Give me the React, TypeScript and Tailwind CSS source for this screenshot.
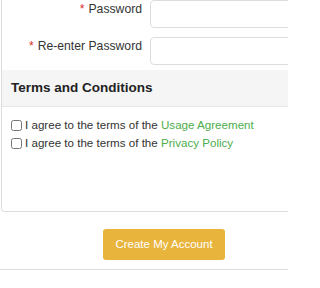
import React from "react";

const FONT = { fontFamily: '"Liberation Sans", Arial, sans-serif' };

const FieldRow: React.FC<{ label: string }> = ({ label }) => (
  <div className="flex items-start h-[28px]">
    <label className="w-[140px] shrink-0 whitespace-nowrap pt-[1px] text-right text-[12.2px] leading-[16px] text-[#333]">
      <span className="text-[#d9332b] mr-[4px]">*</span>
      {label}
    </label>
    <input
      type="password"
      className="ml-[8px] h-[28px] min-w-0 flex-1 rounded-[4px] border border-[#ddd] bg-white"
    />
  </div>
);

export default function App() {
  return (
    <div className="w-[288px] h-[288px] overflow-hidden bg-white" style={FONT}>
      <div className="ml-[1px] w-[320px] h-[212px] border border-t-0 border-[#ddd] rounded-b-[4px] flex flex-col">
        <div className="flex flex-col gap-[9px]">
          <FieldRow label="Password" />
          <FieldRow label="Re-enter Password" />
        </div>
        <div className="mt-[5px] h-[37px] bg-[#f5f5f5] border-b border-[#e6e6e6] flex items-center pl-[9px]">
          <h3 className="text-[13.5px] font-bold text-[#222]">Terms and Conditions</h3>
        </div>
        <div className="pt-[9px] pl-[9px] text-[11.6px] text-[#333] leading-[18px]">
          <label className="flex items-center">
            <input type="checkbox" className="w-[11px] h-[11px] mr-[3px]" />
            I agree to the terms of the&nbsp;
            <a className="text-[#4cae4c]">Usage Agreement</a>
          </label>
          <label className="flex items-center">
            <input type="checkbox" className="w-[11px] h-[11px] mr-[3px]" />
            I agree to the terms of the&nbsp;
            <a className="text-[#4cae4c]">Privacy Policy</a>
          </label>
        </div>
      </div>
      <div className="flex justify-center pt-[17px] pl-[40px]">
        <button className="w-[122px] h-[31px] rounded-[3px] bg-[#e9b43c] text-white text-[11.5px]">
          Create My Account
        </button>
      </div>
      <hr className="mt-[9px] border-t border-[#ddd]" />
    </div>
  );
}
